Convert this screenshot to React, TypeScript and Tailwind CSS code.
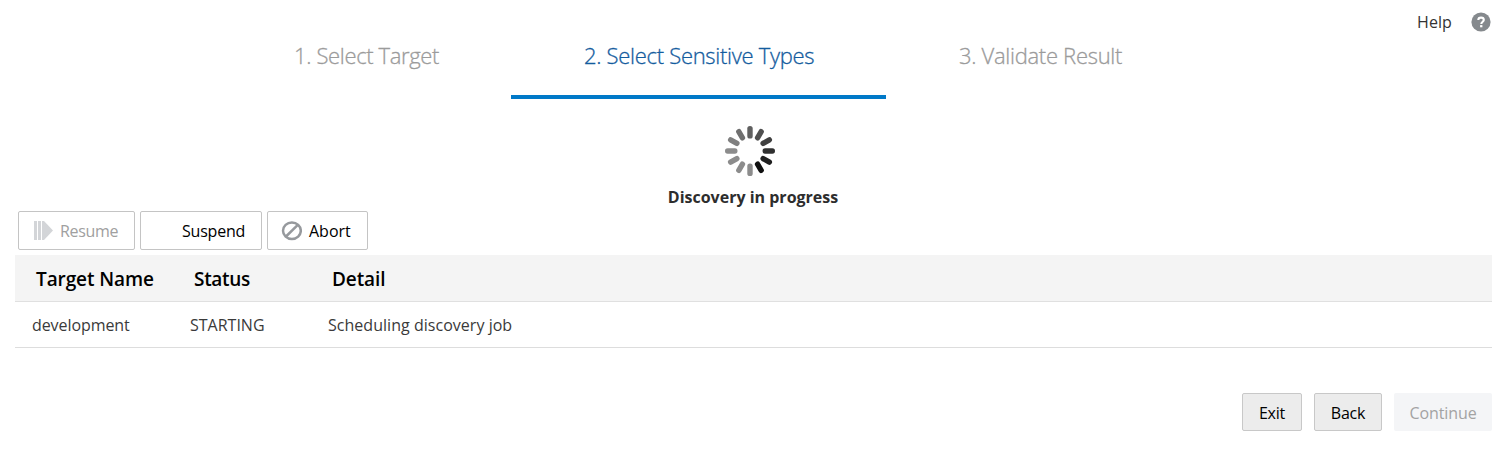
import React from 'react';

const spokes = ['#606060', '#505050', '#404040', '#303030', '#202020', '#101010', '#8c8c8c', '#8c8c8c', '#8c8c8c', '#8c8c8c', '#808080', '#707070'];

function Spinner() {
  return (
    <svg width="50" height="50" viewBox="-25 -25 50 50" aria-hidden="true">
      {spokes.map((color, i) => (
        <rect key={i} x="-2.7" y="-25" width="5.4" height="12.5" rx="2.6" fill={color} transform={`rotate(${i * 30})`} />
      ))}
    </svg>
  );
}

function ResumeIcon() {
  return (
    <svg width="19" height="19" viewBox="0 0 19 19" fill="#d3d5d8" className="shrink-0" aria-hidden="true">
      <rect x="0" y="0" width="3" height="19" />
      <rect x="4" y="0" width="3" height="19" />
      <path d="M8 0 L10 0 L19 9.5 L10 19 L8 19 Z" />
    </svg>
  );
}

function AbortIcon() {
  return (
    <svg width="21" height="20" viewBox="0 0 21 20" fill="none" stroke="#96999d" strokeWidth="2.5" className="shrink-0" aria-hidden="true">
      <ellipse cx="10.9" cy="9.7" rx="8.9" ry="8.3" />
      <path d="M5 15.5 L16.8 3.9" />
    </svg>
  );
}

function HelpIcon() {
  return (
    <svg width="20" height="20" viewBox="0 0 20 20" aria-hidden="true">
      <circle cx="10" cy="10" r="9.6" fill="#85898d" />
      <path d="M7.3 8 C7.3 4.8 12.8 4.8 12.8 8 C12.8 9.7 10.3 9.8 10.3 12" fill="none" stroke="#fff" strokeWidth="2.1" />
      <rect x="9.1" y="13.1" width="2.3" height="2.2" fill="#fff" />
    </svg>
  );
}

export default function App() {
  return (
    <div className="flex h-[449px] w-[1500px] flex-col overflow-hidden bg-white font-['Open_Sans','Noto_Sans',sans-serif] text-[16px] leading-[22px] whitespace-nowrap text-black">
      <header className="flex h-[99px] justify-between">
        <nav className="ml-[222px] flex h-full text-[22px] leading-[30px] font-light text-[#9b9b9b] [-webkit-text-stroke:0.3px]">
          <div className="flex w-[289px] items-start pt-[40px] pl-[72px] tracking-[-0.36px]">1. Select Target</div>
          <div className="flex w-[375px] items-start border-b-4 border-[#0079c8] pt-[40px] pl-[73px] tracking-[-0.3px] text-[#145c9e]">2. Select Sensitive Types</div>
          <div className="flex w-[309px] items-start pt-[40px] pl-[73px] tracking-[-0.3px]">3. Validate Result</div>
        </nav>
        <div className="flex h-[44px] w-[83px] items-center gap-[18px] text-[16px] text-[#333]">
          <a className="w-[36px] tracking-[0.1px]">Help</a>
          <HelpIcon />
        </div>
      </header>
      <section className="flex h-[112px] flex-col items-center pt-[27px]">
        <Spinner />
        <p className="mt-[10px] ml-[6px] text-[16px] font-bold text-[#2d2d2d]">Discovery in progress</p>
      </section>
      <div className="ml-[18px] flex h-[39px] gap-[5px]">
        <button className="flex w-[117px] items-center rounded-[2px] border border-[#c4c4c4] pl-[15px] text-[#a0a0a0]">
          <ResumeIcon />
          <span className="ml-[7px] tracking-[-0.3px]">Resume</span>
        </button>
        <button className="flex w-[122px] items-center rounded-[2px] border border-[#c4c4c4] pl-[41px]">
          <span className="tracking-[-0.2px]">Suspend</span>
        </button>
        <button className="flex w-[101px] items-center rounded-[2px] border border-[#c4c4c4] pl-[13px]">
          <AbortIcon />
          <span className="ml-[7px]">Abort</span>
        </button>
      </div>
      <div className="mt-[5px] ml-[15px] w-[1477px]">
        <div className="grid h-[47px] grid-cols-[158px_138px_1fr] items-center border-b border-[#e0e0e0] bg-[#f4f4f4] pt-[2px] pl-[21px] text-[19px] font-semibold tracking-[-0.3px]">
          <span className="tracking-[-0.1px]">Target Name</span>
          <span>Status</span>
          <span className="tracking-[-0.1px]">Detail</span>
        </div>
        <div className="grid h-[46px] grid-cols-[158px_138px_1fr] items-center border-b border-[#dddddd] pl-[17px] text-[#3a3a3a]">
          <span className="tracking-[-0.08px]">development</span>
          <span>STARTING</span>
          <span className="tracking-[0.03px]">Scheduling discovery job</span>
        </div>
      </div>
      <footer className="mt-[45px] mr-[8px] flex h-[38px] justify-end gap-[12px]">
        <button className="w-[60px] rounded-[2px] border border-[#c8c8c8] bg-[#ececec] pt-[2px] tracking-[-0.2px]">Exit</button>
        <button className="w-[68px] rounded-[2px] border border-[#c8c8c8] bg-[#ececec] pt-[2px] tracking-[-0.2px]">Back</button>
        <button className="w-[98px] rounded-[2px] bg-[#f4f5f7] pt-[2px] tracking-[-0.1px] text-[#a3a3a3]">Continue</button>
      </footer>
    </div>
  );
}
